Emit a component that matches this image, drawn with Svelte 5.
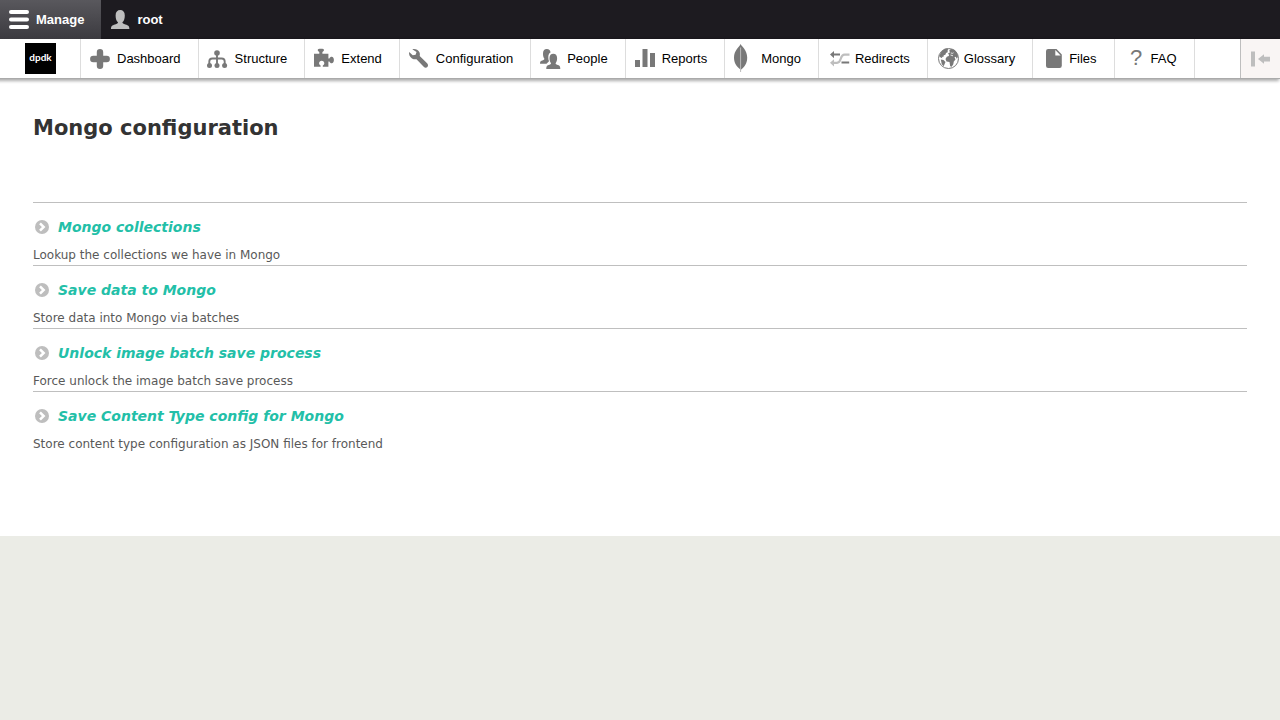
<script>
  const tabs = [
    { id: 'dashboard', label: 'Dashboard' },
    { id: 'structure', label: 'Structure' },
    { id: 'extend', label: 'Extend' },
    { id: 'configuration', label: 'Configuration' },
    { id: 'people', label: 'People' },
    { id: 'reports', label: 'Reports' },
    { id: 'mongo', label: 'Mongo' },
    { id: 'redirects', label: 'Redirects' },
    { id: 'glossary', label: 'Glossary' },
    { id: 'files', label: 'Files' },
    { id: 'faq', label: 'FAQ' },
  ];

  const items = [
    { title: 'Mongo collections', text: 'Lookup the collections we have in Mongo' },
    { title: 'Save data to Mongo', text: 'Store data into Mongo via batches' },
    { title: 'Unlock image batch save process', text: 'Force unlock the image batch save process' },
    { title: 'Save Content Type config for Mongo', text: 'Store content type configuration as JSON files for frontend' },
  ];
</script>

<header class="toolbar">
  <nav class="bar" aria-label="Toolbar">
    <a class="bar-item active" href="#manage">
      <svg class="bar-icon" viewBox="0 0 20 20" aria-hidden="true">
        <path d="M2 2h16M2 9.500h16M2 17h16" stroke="#fff" stroke-width="4" stroke-linecap="round" />
      </svg>
      Manage
    </a>
    <a class="bar-item" href="#user">
      <svg class="bar-icon" viewBox="0 0 20 20" aria-hidden="true">
        <path fill="#bebebe" d="M1 19c0-3 1-3.600 4-4.500 2-.6 3-1 3-2.200C6.500 11 5.600 9 5.600 5.500 5.600 1.900 7.400 0 10.200 0s4.600 1.900 4.600 5.500c0 3.500-.9 5.500-2.400 6.800 0 1.200 1 1.600 3 2.200 3 .9 4 1.500 4 4.500z" />
      </svg>
      root
    </a>
  </nav>

  <nav class="tray" aria-label="Administration menu">
    <a class="home" href="#home" aria-label="Home">
      <svg class="logo" viewBox="0 0 31 31" aria-hidden="true">
        <rect width="31" height="31" />
        <text x="15.500" y="18" text-anchor="middle">dpdk</text>
      </svg>
    </a>
    {#each tabs as tab}
      <a class="tab" href="#{tab.id}">
        <svg class="tab-icon" viewBox="0 0 20 29" aria-hidden="true">
          {#if tab.id === 'dashboard'}
            <path d="M10 8.300v13.400M3.300 15h13.400" stroke="#787878" stroke-width="6.400" stroke-linecap="round" />
          {:else if tab.id === 'structure'}
            <circle cx="9" cy="9" r="2.800" />
            <path d="M9 9v12M1.300 21v-3.500q0-3 3-3h9.400q3 0 3 3V21" fill="none" stroke="#787878" stroke-width="1.900" />
            <circle cx="1.500" cy="21.500" r="2.500" />
            <circle cx="9" cy="21.500" r="2.500" />
            <circle cx="16.600" cy="21.500" r="2.500" />
          {:else if tab.id === 'extend'}
            <path d="M0 9.800h5.300V8C4.300 7.600 3.700 6.900 3.700 6.100c0-1 1-1.400 3.200-1.400S10 5.100 10 6.100c0 .8-.6 1.500-1.600 1.900v1.800h6v4.700h1c.4-1.200 1.300-1.800 2.300-1.800 1.400 0 2.200 1.400 2.200 3.300s-.8 3.300-2.200 3.300c-1 0-1.900-.6-2.300-1.800h-1v5.300H8.800v-1.300c1-.5 1.500-1.200 1.500-2.200 0-1.500-1.100-2.600-2.600-2.600s-2.600 1.100-2.600 2.600c0 1 .5 1.700 1.500 2.200v1.300H0z" />
          {:else if tab.id === 'configuration'}
            <path d="M3.300 5.200C6 4.500 9 5.500 10.300 8c.7 1.400.7 2.600.4 4l7.400 7.200c1.200 1.200 1.200 2.700.3 3.700-1 1-2.600 1-3.700-.2L7.500 15.200c-1.500.4-3 .1-4.500-.8C.6 12.900-.4 10.400.2 8l3.500 3.300 2.900-.6.9-2.600z" />
          {:else if tab.id === 'people'}
            <path d="M0 19.700c0-2.400.8-2.800 3-3.500 1.500-.5 1.600-1.100 1.100-1.900C3.200 13 3 11.300 3 9.300 3 6.500 4.500 5 6.800 5s3.700 1.500 3.700 3.500c-1.700 1-2.200 2.600-2.200 4.900 0 1.500.2 2.700.7 3.900l-2.500 2.400z" />
            <path d="M6.300 25c0-3 .9-3.500 3.200-4.200 1.600-.5 1.700-1.100 1.200-2-.8-1.200-1.200-2.700-1.200-4.700 0-2.900 1.500-4.400 3.800-4.400s3.800 1.500 3.800 4.400c0 2-.4 3.500-1.200 4.700-.5.900-.4 1.500 1.200 2 2.300.7 3.200 1.200 3.200 4.200z" />
          {:else if tab.id === 'reports'}
            <path d="M0 16h5v7H0zM7.500 5h5v18h-5zM15 9h5v14h-5z" />
          {:else if tab.id === 'mongo'}
            <path d="M6.600 0C8 3 13.200 6 13.200 13.500c0 6-2.600 9.500-6.400 12.300C2.500 22.500 0 19 0 13.500 0 6.500 5.200 3 6.600 0z" />
            <path d="M6.600 3.500v24.500" stroke="#bbb" stroke-width="1" />
          {:else if tab.id === 'redirects'}
            <path d="M21.500 10.600h-5c-5 0-2.500 8.200-7.500 8.200H5" fill="none" stroke="#bebebe" stroke-width="2.200" />
            <path d="M2 18.800 6 15.200v7.200z" fill="#bebebe" />
            <path d="M5 10.600h7M13.500 18.600h7.700" stroke="#787878" stroke-width="2" />
            <path d="M2 10.600 6 7v7.200z" />
          {:else if tab.id === 'glossary'}
            <circle cx="11.500" cy="14.500" r="10" fill="#fff" stroke="#787878" />
            <path d="M3.200 10C4.500 7 7 5 9.500 4.600l2 .8-1.200 1.500.7 1.100-2 1-.6 1.700-1.600.6-.5 1.700-1.500-.3.6 1.600-1.800-.7-1.500-1.600zM3.800 15.500l2.700.5 2 2-1 2.200-.7 2-2-2z" />
            <path d="M12.300 6.200 14 5l3 .5c2 1.400 3.500 3.700 4 6.500l-1 3-1.300-2.200-1.200.5 1 2.200-1.700 2-.5 2.800-1.600 2.400-1.500-.5-.7-4.200-3-.6-1-2.300 1.300-2.400 2-.8.300-1.300-1.200-.5 1-1.300 1-.1z" />
            <path d="m13.800 8.900 1.500.5 1.200-.6M13.500 11l2.500.8" stroke="#fff" stroke-width=".8" fill="none" />
          {:else if tab.id === 'files'}
            <path d="M6.200 5h8.300l5.300 5.500v11.300q0 2.200-2.200 2.200H6.200Q4 24 4 21.800V7.200Q4 5 6.200 5z" />
            <path d="M13.300 6v5.500h5.400z" fill="#fff" />
          {:else}
            <text class="question" x="6" y="21">?</text>
          {/if}
        </svg>
        {tab.label}
      </a>
    {/each}
    <button class="orientation" type="button" aria-label="Vertical orientation">
      <svg viewBox="0 0 20 20" aria-hidden="true">
        <path fill="#bebebe" d="M0 2.500h4v15H0zM7 10l6-4.700v2.400h6v4.800h-6v2.300z" />
      </svg>
    </button>
  </nav>
</header>

<main>
  <h1>Mongo configuration</h1>
  <ul class="admin-list">
    {#each items as item}
      <li>
        <a href="#config">
          <svg class="bullet" viewBox="0 0 14 14" aria-hidden="true">
            <circle cx="7" cy="7" r="7" fill="#bebebe" />
            <path d="m5 3.300 3.700 3.700L5 10.700" fill="none" stroke="#fff" stroke-width="2.500" />
          </svg>
          {item.title}
        </a>
        <p>{item.text}</p>
      </li>
    {/each}
  </ul>
</main>

<style>
  :global(body) {
    margin: 0;
    background: #ebece6;
  }

  a {
    text-decoration: none;
  }

  /* Toolbar */
  .toolbar {
    position: relative;
    font: 13px/39px "Liberation Sans", Arial, sans-serif;
  }

  .bar {
    display: flex;
    height: 39px;
    background: #1d1b20;
  }

  .bar-item {
    display: flex;
    align-items: center;
    gap: 7px;
    padding: 0 17px 0 9px;
    color: #fff;
    font-weight: 700;
  }

  .bar-item.active {
    background: linear-gradient(#59585d, #3b3a3f);
  }

  .bar-icon {
    width: 20px;
    height: 20px;
    overflow: visible;
  }

  .tray {
    display: flex;
    height: 39px;
    background: #fff;
    border-bottom: 1px solid #aaa;
    box-shadow: -2px 1px 3px 1px rgba(0, 0, 0, 0.33);
  }

  .home {
    display: flex;
    align-items: center;
    padding: 0 24px 0 25px;
    border-right: 1px solid #ddd;
  }

  .logo {
    width: 31px;
    height: 31px;
  }

  .logo text {
    fill: #fff;
    font: 700 10px Lato, sans-serif;
  }

  .tab {
    display: flex;
    align-items: center;
    gap: 7px;
    padding: 0 17px 0 9px;
    border-right: 1px solid #ddd;
    color: #000;
  }

  .tab-icon {
    width: 20px;
    height: 29px;
    overflow: visible;
    fill: #787878;
  }

  .question {
    font: 22px "Liberation Sans", Arial, sans-serif;
  }

  .orientation {
    display: flex;
    align-items: center;
    justify-content: center;
    width: 40px;
    margin-left: auto;
    padding: 0;
    border: 0;
    border-left: 1px solid #bebebe;
    background: #f9f5f4;
    cursor: pointer;
  }

  .orientation svg {
    width: 20px;
    height: 20px;
  }

  /* Content */
  main {
    padding: 33px 33px 82px;
    background: #fff;
    font-family: "DejaVu Sans", sans-serif;
  }

  h1 {
    margin: 0 0 58px;
    color: #333;
    font-size: 21px;
    line-height: 32px;
  }

  .admin-list {
    margin: 0;
    padding: 0;
    list-style: none;
  }

  .admin-list li {
    border-top: 1px solid #bfbfbf;
  }

  .admin-list a {
    display: flex;
    align-items: center;
    gap: 9px;
    padding: 14px 0 0 2px;
    color: #23bfa8;
    font-size: 14px;
    font-style: italic;
    font-weight: 700;
    line-height: 20px;
  }

  .bullet {
    width: 14px;
    height: 14px;
  }

  .admin-list p {
    margin: 0;
    padding: 8px 0 0;
    color: #595959;
    font-size: 12px;
    line-height: 20px;
  }
</style>
